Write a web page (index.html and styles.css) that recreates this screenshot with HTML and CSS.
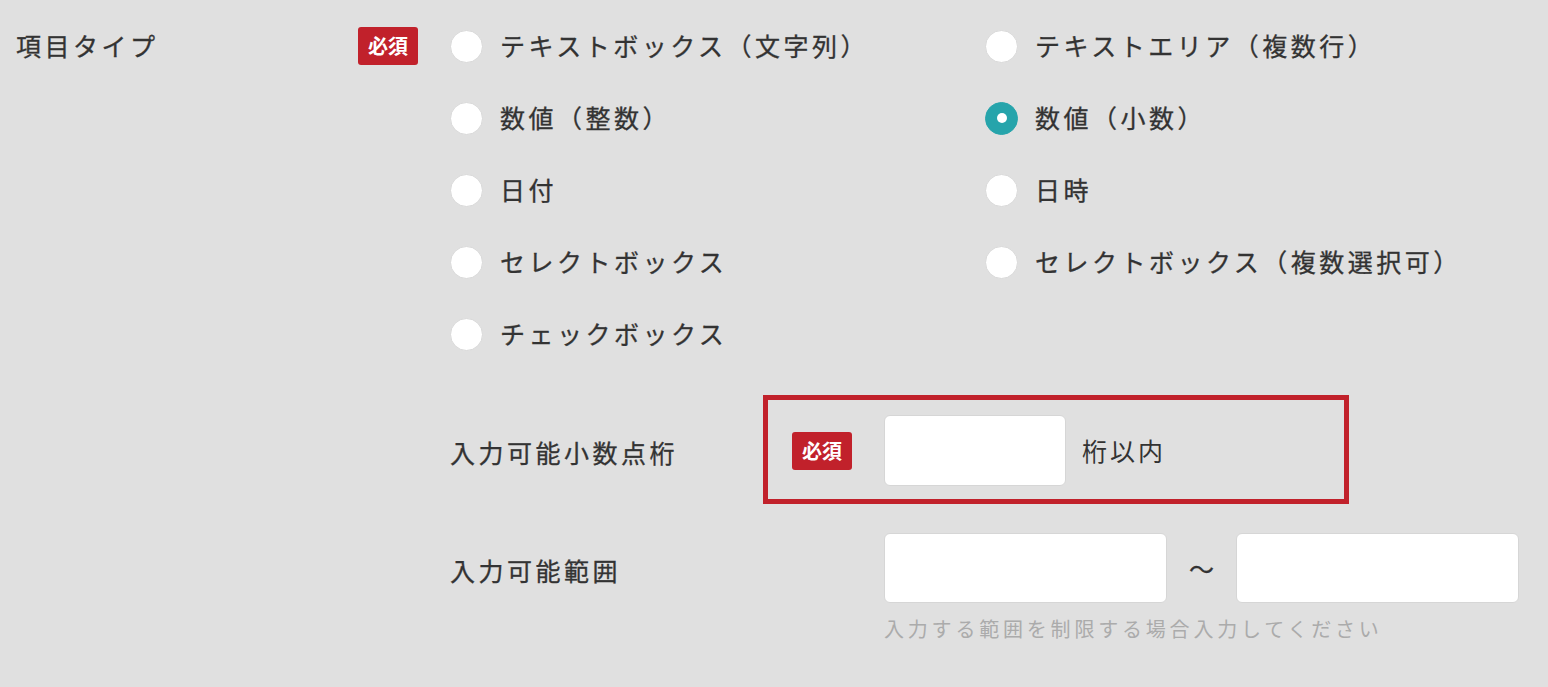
FILE: index.html
```html
<!DOCTYPE html>
<html lang="ja">
<head>
<meta charset="utf-8">
<title>項目タイプ</title>
<link rel="stylesheet" href="styles.css">
</head>
<body>
<div class="field">
  <div class="field-head">
    <span class="field-label">項目タイプ</span>
    <span class="badge">必須</span>
  </div>
  <div class="field-body">
    <div class="options">
      <label class="option"><span class="radio"></span><span class="opt-text">テキストボックス（文字列）</span></label>
      <label class="option"><span class="radio"></span><span class="opt-text">テキストエリア（複数行）</span></label>
      <label class="option"><span class="radio"></span><span class="opt-text">数値（整数）</span></label>
      <label class="option"><span class="radio checked"></span><span class="opt-text">数値（小数）</span></label>
      <label class="option"><span class="radio"></span><span class="opt-text">日付</span></label>
      <label class="option"><span class="radio"></span><span class="opt-text">日時</span></label>
      <label class="option"><span class="radio"></span><span class="opt-text">セレクトボックス</span></label>
      <label class="option"><span class="radio"></span><span class="opt-text">セレクトボックス（複数選択可）</span></label>
      <label class="option"><span class="radio"></span><span class="opt-text">チェックボックス</span></label>
    </div>

    <div class="sub-row">
      <div class="sub-label sub-label-short">入力可能小数点桁</div>
      <div class="highlight">
        <span class="badge badge-gap">必須</span>
        <div class="input input-small"></div>
        <span class="unit">桁以内</span>
      </div>
    </div>

    <div class="sub-row range-row">
      <div class="sub-label sub-label-long">入力可能範囲</div>
      <div class="range">
        <div class="range-inputs">
          <div class="input input-range"></div>
          <span class="tilde">〜</span>
          <div class="input input-range"></div>
        </div>
        <div class="help">入力する範囲を制限する場合入力してください</div>
      </div>
    </div>
  </div>
</div>
</body>
</html>
```

FILE: styles.css
```css
html, body {
  margin: 0;
  padding: 0;
  background: #e0e0e0;
}

body {
  font-family: "Noto Sans CJK JP", "Noto Sans", sans-serif;
  color: #333333;
  font-size: 25px;
  letter-spacing: 3.5px;
  font-weight: 400;
  -webkit-text-stroke: 0.3px #333333;
}

.field {
  display: flex;
  padding-left: 16px;
  padding-top: 10px;
}

.field-head {
  width: 402px;
  height: 72px;
  display: flex;
  align-items: center;
  justify-content: space-between;
  flex-shrink: 0;
}

.field-label {
  line-height: 1;
  margin-top: -1px;
}

.badge {
  display: inline-flex;
  align-items: center;
  justify-content: center;
  width: 60px;
  height: 38px;
  box-sizing: border-box;
  background: #c1212b;
  color: #ffffff;
  font-size: 20px;
  font-weight: 700;
  letter-spacing: 0;
  border-radius: 3px;
  line-height: 1;
  -webkit-text-stroke: 0;
}

.field-body {
  margin-left: 32px;
  display: flex;
  flex-direction: column;
}

.options {
  display: grid;
  grid-template-columns: 535px auto;
  grid-auto-rows: 72px;
}

.option {
  display: flex;
  align-items: center;
}

.radio {
  width: 33px;
  height: 33px;
  border-radius: 50%;
  background: #ffffff;
  box-sizing: border-box;
  border: 1px solid #d9d9d9;
  flex-shrink: 0;
  position: relative;
}

.radio.checked {
  background: #26a4ab;
  border-color: #26a4ab;
}

.radio.checked::after {
  content: "";
  position: absolute;
  left: 50%;
  top: 50%;
  width: 10px;
  height: 10px;
  margin: -5px 0 0 -5px;
  border-radius: 50%;
  background: #ffffff;
}

.opt-text {
  margin-left: 17px;
  line-height: 1;
  margin-top: -2px;
}

.sub-row {
  display: flex;
  align-items: center;
  margin-top: 25px;
}

.sub-label {
  flex-shrink: 0;
}

.sub-label-short {
  width: 313px;
  padding-top: 5px;
}

.sub-label-long {
  width: 434px;
  align-self: flex-start;
  padding-top: 19px;
}

.highlight {
  width: 586px;
  box-sizing: border-box;
  border: 5px solid #c1212b;
  padding: 15px 24px 13px;
  display: flex;
  align-items: center;
}

.badge-gap {
  margin-right: 32px;
}

.input {
  background: #ffffff;
  border: 1px solid #d6d6d6;
  border-radius: 6px;
  box-sizing: border-box;
}

.input-small {
  width: 182px;
  height: 71px;
}

.unit {
  margin-left: 16px;
  letter-spacing: 3px;
  margin-top: -2px;
  -webkit-text-stroke: 0;
}

.range-row {
  margin-top: 29px;
  align-items: flex-start;
}

.range-inputs {
  display: flex;
  align-items: center;
}

.input-range {
  width: 283px;
  height: 70px;
}

.tilde {
  width: 69px;
  text-align: center;
  letter-spacing: 0;
}

.help {
  margin-top: 11px;
  font-size: 20px;
  letter-spacing: 3.8px;
  color: #ababab;
  line-height: 1.5;
  -webkit-text-stroke: 0;
}
```
